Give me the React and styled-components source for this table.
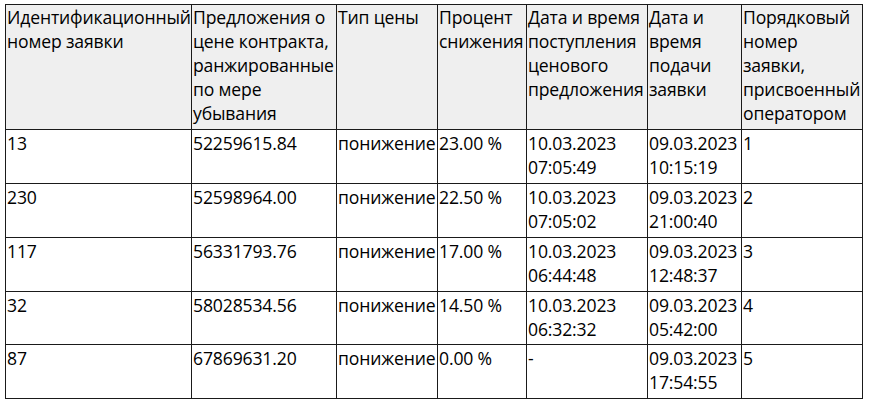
import React from "react";
import styled, { createGlobalStyle } from "styled-components";

const GlobalStyle = createGlobalStyle`
    html, body {
        margin: 0;
        padding: 0;
        background: #ffffff;
    }
`;

const Page = styled.div`
    padding: 4px 0 0 5px;
    font-family: "Open Sans", "Liberation Sans", sans-serif;
    font-size: 17.6px;
    line-height: 24px;
    letter-spacing: -0.15px;
    color: #000;
`;

const Table = styled.table`
    border-collapse: collapse;
    table-layout: fixed;
    width: 857px;
`;

const HeadRow = styled.tr`
    height: 125px;
    background: #efefef;
`;

const Row = styled.tr`
    height: ${props => props.h || 54}px;
`;

const HeadCell = styled.th`
    font-weight: normal;
    text-align: left;
    vertical-align: top;
    padding: 0 0 0 1px;
    border: 1px solid #1a1a1a;
    overflow: hidden;
    white-space: nowrap;
`;

const Cell = styled.td`
    vertical-align: top;
    padding: 1px 0 0 1px;
    border: 1px solid #1a1a1a;
    overflow: hidden;
    white-space: nowrap;
`;

const columns = [
    { w: 186, title: ["Идентификационный", "номер заявки"] },
    { w: 145, title: ["Предложения о", "цене контракта,", "ранжированные", "по мере", "убывания"] },
    { w: 101, title: ["Тип цены"] },
    { w: 89, title: ["Процент", "снижения"] },
    { w: 121, title: ["Дата и время", "поступления", "ценового", "предложения"] },
    { w: 94, title: ["Дата и", "время", "подачи", "заявки"] },
    { w: 121, title: ["Порядковый", "номер", "заявки,", "присвоенный", "оператором"] },
];

const rows = [
    ["13", "52259615.84", "понижение", "23.00 %", ["10.03.2023", "07:05:49"], ["09.03.2023", "10:15:19"], "1"],
    ["230", "52598964.00", "понижение", "22.50 %", ["10.03.2023", "07:05:02"], ["09.03.2023", "21:00:40"], "2"],
    ["117", "56331793.76", "понижение", "17.00 %", ["10.03.2023", "06:44:48"], ["09.03.2023", "12:48:37"], "3"],
    ["32", "58028534.56", "понижение", "14.50 %", ["10.03.2023", "06:32:32"], ["09.03.2023", "05:42:00"], "4"],
    ["87", "67869631.20", "понижение", "0.00 %", "-", ["09.03.2023", "17:54:55"], "5"],
];

const Lines = ({ value }) =>
    Array.isArray(value)
        ? value.map((line, i) => <div key={i}>{line}</div>)
        : value;

export default function App() {
    return (
        <Page>
            <GlobalStyle />
            <Table>
                <colgroup>
                    {columns.map((c, i) => <col key={i} style={{ width: c.w }} />)}
                </colgroup>
                <thead>
                    <HeadRow>
                        {columns.map((c, i) => (
                            <HeadCell key={i}><Lines value={c.title} /></HeadCell>
                        ))}
                    </HeadRow>
                </thead>
                <tbody>
                    {rows.map((r, i) => (
                        <Row key={i} h={i === 3 ? 53 : 54}>
                            {r.map((v, j) => <Cell key={j}><Lines value={v} /></Cell>)}
                        </Row>
                    ))}
                </tbody>
            </Table>
        </Page>
    );
}
